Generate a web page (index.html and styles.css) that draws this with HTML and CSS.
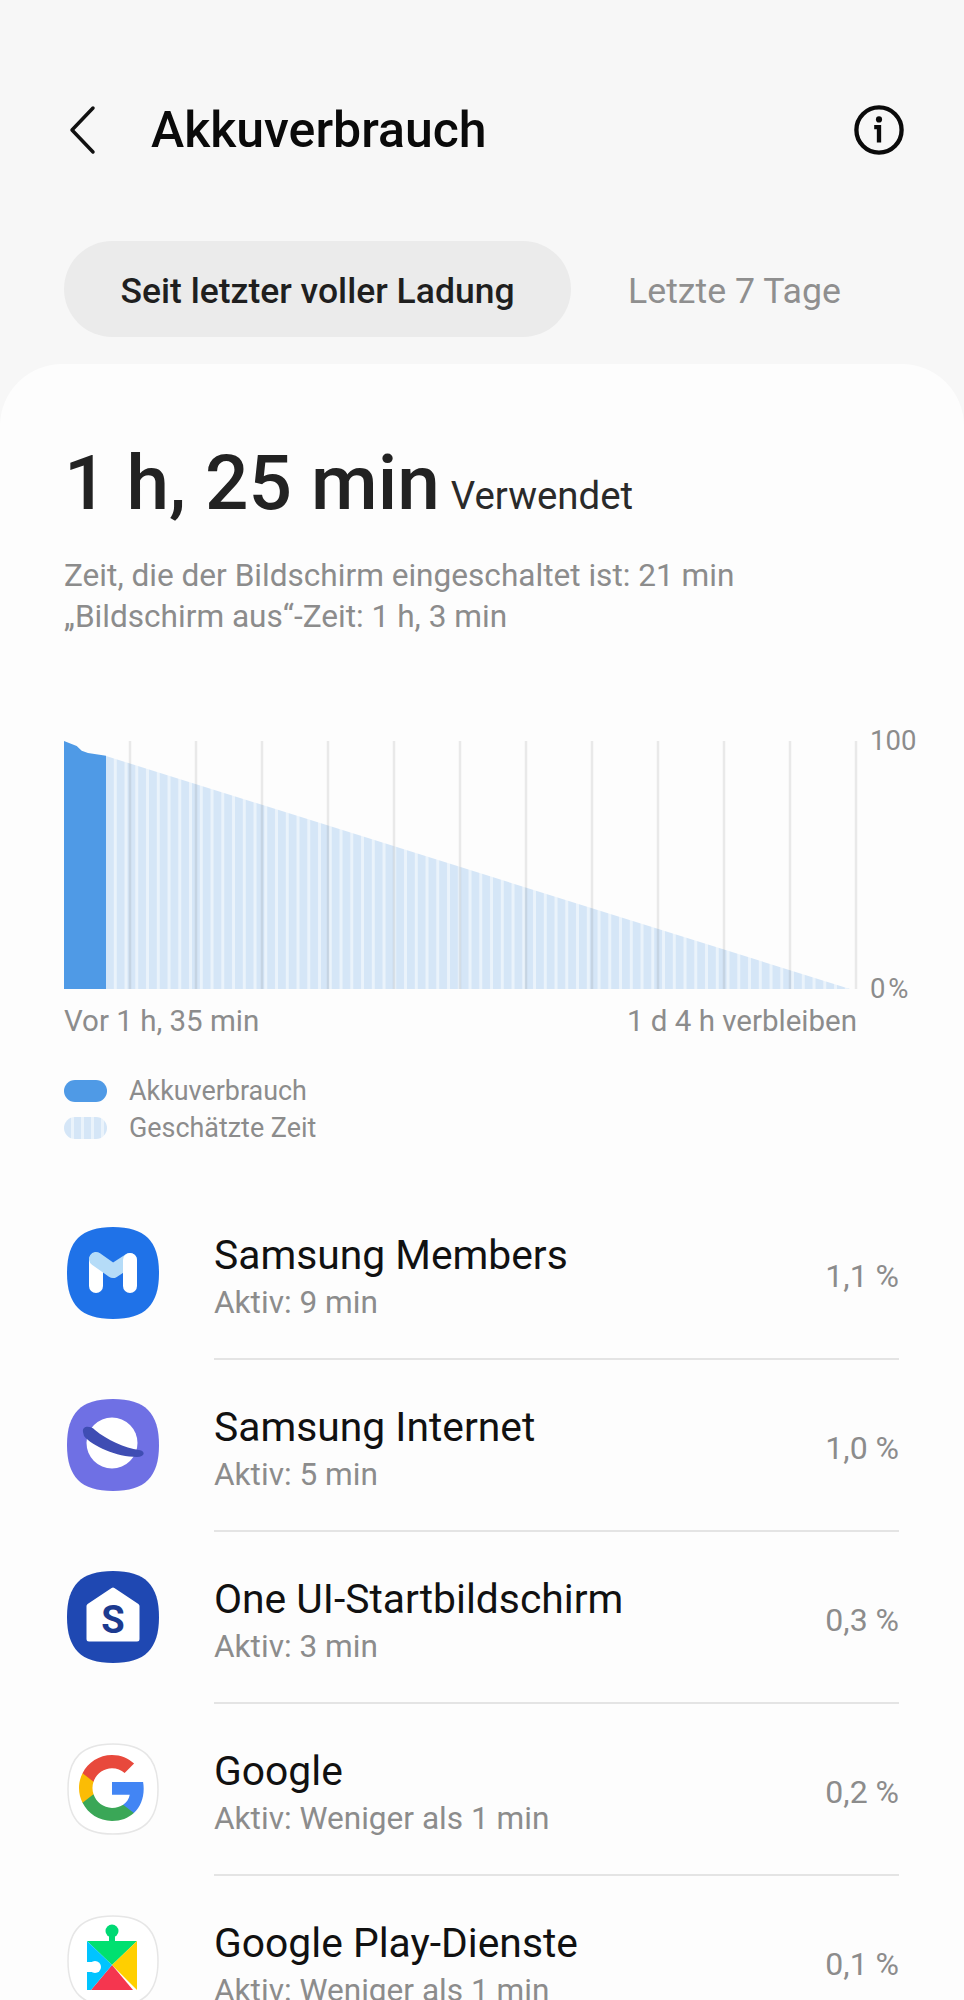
FILE: index.html
```html
<!DOCTYPE html>
<html lang="de">
<head>
<meta charset="utf-8">
<title>Akkuverbrauch</title>
<link rel="stylesheet" href="styles.css">
</head>
<body>
<div class="page">
  <header class="topbar">
    <svg class="back" viewBox="0 0 30 50"><path d="M25 3 L4 25 L25 47"/></svg>
    <h1 class="title">Akkuverbrauch</h1>
    <svg class="info" viewBox="0 0 52 52"><circle cx="26" cy="26" r="23.5"/><circle class="dot" cx="26" cy="15" r="3.2"/><path d="M21 23 H26 V39"/></svg>
  </header>
  <nav class="tabs">
    <div class="tab tab-active">Seit letzter voller Ladung</div>
    <div class="tab">Letzte 7 Tage</div>
  </nav>
  <main class="card">
    <div class="summary"><span class="big">1 h, 25 min</span><span class="used">Verwendet</span></div>
    <p class="desc">Zeit, die der Bildschirm eingeschaltet ist: 21 min<br>„Bildschirm aus“-Zeit: 1 h, 3 min</p>
    <div class="chart-row">
      <svg class="chart" viewBox="0 0 794 248">
        <defs>
          <pattern id="stripes" width="10.75" height="248" patternUnits="userSpaceOnUse" x="42">
            <rect width="10.75" height="248" fill="#eaf3fb"/>
            <rect width="7.75" height="248" fill="#d5e6f7"/>
          </pattern>
        </defs>
        <polygon points="42,15 786,248 42,248" fill="url(#stripes)"/>
        <path d="M0 0 L12.7 5 L17.7 9.7 L24 12 L42 14.7 V248 H0 Z" fill="#4f9ae6"/>
        <g class="grid">
          <line x1="66" y1="0" x2="66" y2="248"/><line x1="132" y1="0" x2="132" y2="248"/>
          <line x1="198" y1="0" x2="198" y2="248"/><line x1="264" y1="0" x2="264" y2="248"/>
          <line x1="330" y1="0" x2="330" y2="248"/><line x1="396" y1="0" x2="396" y2="248"/>
          <line x1="462" y1="0" x2="462" y2="248"/><line x1="528" y1="0" x2="528" y2="248"/>
          <line x1="594" y1="0" x2="594" y2="248"/><line x1="660" y1="0" x2="660" y2="248"/>
          <line x1="726" y1="0" x2="726" y2="248"/><line x1="792" y1="0" x2="792" y2="248"/>
        </g>
      </svg>
      <div class="axis"><span>100</span><span>0 %</span></div>
    </div>
    <div class="chart-labels"><span>Vor 1 h, 35 min</span><span>1 d 4 h verbleiben</span></div>
    <div class="legend">
      <div class="legend-item"><span class="swatch swatch-solid"></span>Akkuverbrauch</div>
      <div class="legend-item"><span class="swatch swatch-striped"></span>Geschätzte Zeit</div>
    </div>
    <ul class="apps">
      <li class="app">
        <svg class="icon" viewBox="0 0 92 92">
          <path fill="#1f72e8" d="M46 0C78 0 92 14 92 46S78 92 46 92 0 78 0 46 14 0 46 0Z"/>
          <path d="M29 59V33" stroke="#fff" stroke-width="14" stroke-linecap="round" fill="none"/>
          <path d="M29 32 L46 44 L63 33" stroke="#b5dcf8" stroke-width="14" stroke-linecap="round" stroke-linejoin="round" fill="none"/>
          <path d="M63 59V33" stroke="#fff" stroke-width="14" stroke-linecap="round" fill="none"/>
        </svg>
        <div class="app-body">
          <div class="app-text"><div class="app-name">Samsung Members</div><div class="app-sub">Aktiv: 9 min</div></div>
          <div class="app-pct">1,1 %</div>
        </div>
      </li>
      <li class="app">
        <svg class="icon" viewBox="0 0 92 92">
          <path fill="#6f70e4" d="M46 0C78 0 92 14 92 46S78 92 46 92 0 78 0 46 14 0 46 0Z"/>
          <circle cx="45" cy="44" r="25.5" fill="#fff"/>
          <path fill="#3f4db3" d="M16 33 C15 26 24 27 28 31 C40 41 58 49 72 51 C79 52 78 58 70 58 C50 58 25 47 17 37 Z"/>
        </svg>
        <div class="app-body">
          <div class="app-text"><div class="app-name">Samsung Internet</div><div class="app-sub">Aktiv: 5 min</div></div>
          <div class="app-pct">1,0 %</div>
        </div>
      </li>
      <li class="app">
        <svg class="icon" viewBox="0 0 92 92">
          <path fill="#1f48b2" d="M46 0C78 0 92 14 92 46S78 92 46 92 0 78 0 46 14 0 46 0Z"/>
          <path fill="#fff" stroke="#fff" stroke-width="5" stroke-linejoin="round" d="M46 19 L70 35 V68 H22 V35 Z"/>
          <text class="icon-s" x="46" y="62" text-anchor="middle">S</text>
        </svg>
        <div class="app-body">
          <div class="app-text"><div class="app-name">One UI-Startbildschirm</div><div class="app-sub">Aktiv: 3 min</div></div>
          <div class="app-pct">0,3 %</div>
        </div>
      </li>
      <li class="app">
        <svg class="icon" viewBox="0 0 92 92">
          <path fill="#fff" stroke="#e6e6e6" stroke-width="1.500" d="M46 1C77 1 91 15 91 46S77 91 46 91 1 77 1 46 15 1 46 1Z"/>
          <g transform="translate(9 9) scale(3)">
            <path fill="#4285f4" d="M22.560 12.250c0-.78-.07-1.530-.2-2.250H12v4.260h5.920c-.26 1.370-1.040 2.530-2.210 3.310v2.770h3.570c2.080-1.920 3.280-4.740 3.280-8.090z"/>
            <path fill="#3aa757" d="M12 23c2.970 0 5.460-.98 7.280-2.660l-3.570-2.770c-.98.66-2.230 1.060-3.710 1.060-2.860 0-5.290-1.930-6.160-4.530H2.180v2.840C3.990 20.530 7.700 23 12 23z"/>
            <path fill="#fbbc05" d="M5.840 14.090c-.22-.66-.35-1.360-.35-2.090s.13-1.430.35-2.090V7.070H2.180C1.430 8.550 1 10.220 1 12s.43 3.450 1.180 4.930l3.660-2.840z"/>
            <path fill="#e8493c" d="M12 5.380c1.620 0 3.060.56 4.210 1.640l3.150-3.150C17.450 2.090 14.970 1 12 1 7.700 1 3.990 3.470 2.180 7.070l3.660 2.840c.87-2.600 3.300-4.530 6.160-4.530z"/>
          </g>
        </svg>
        <div class="app-body">
          <div class="app-text"><div class="app-name">Google</div><div class="app-sub">Aktiv: Weniger als 1 min</div></div>
          <div class="app-pct">0,2 %</div>
        </div>
      </li>
      <li class="app">
        <svg class="icon" viewBox="0 0 92 92">
          <path fill="#fff" stroke="#e6e6e6" stroke-width="1.500" d="M46 1C77 1 91 15 91 46S77 91 46 91 1 77 1 46 15 1 46 1Z"/>
          <circle cx="45" cy="16" r="6.500" fill="#00d974"/>
          <rect x="42" y="18" width="6" height="10" fill="#00d974"/>
          <polygon points="20,26 70,26 45,50" fill="#00e070"/>
          <polygon points="70,26 70,75 45,50" fill="#ffcf00"/>
          <polygon points="24,75 66,75 45,50" fill="#f5364f"/>
          <polygon points="20,26 45,50 24,75 20,75" fill="#00c4ff"/>
          <circle cx="28" cy="52" r="6" fill="#fff"/>
          <rect x="18" y="47" width="8" height="10" fill="#fff"/>
        </svg>
        <div class="app-body">
          <div class="app-text"><div class="app-name">Google Play-Dienste</div><div class="app-sub">Aktiv: Weniger als 1 min</div></div>
          <div class="app-pct">0,1 %</div>
        </div>
      </li>
    </ul>
  </main>
</div>
</body>
</html>
```
FILE: styles.css
```css
* { box-sizing: border-box; }
html, body { margin: 0; padding: 0; }
body { background: #f7f7f7; font-family: Roboto, "Noto Sans", sans-serif; color: #1a1a1a; }
.page { height: 2000px; overflow: hidden; display: flex; flex-direction: column; padding-top: 100px; }

.topbar { display: flex; align-items: center; height: 60px; padding: 0 60px 0 68px; }
.back { width: 30px; height: 50px; fill: none; stroke: #111; stroke-width: 3.500; stroke-linecap: round; stroke-linejoin: round; margin-right: 53px; }
.title { flex: 1; margin: 0; font-size: 50px; font-weight: 500; color: #0a0a0a; line-height: 60px; }
.info { width: 50px; height: 50px; fill: none; stroke: #0a0a0a; stroke-width: 4.500; }
.info .dot { fill: #0a0a0a; stroke: none; }

.tabs { display: flex; align-items: center; margin-top: 81px; padding-left: 64px; }
.tab { height: 96px; line-height: 100px; font-size: 35.7px; color: #8f8f8f; padding-left: 57px; }
.tab-active { width: 507px; padding: 0; text-align: center; background: #ebebeb; border-radius: 48px; color: #1f1f1f; font-weight: 500; font-size: 35.5px; }

.card { flex: 1; margin-top: 27px; background: #fdfdfd; border-radius: 62px 62px 0 0; padding: 81px 0 0 64px; }
.summary { display: flex; align-items: baseline; height: 76px; }
.big { font-size: 76.5px; font-weight: 500; line-height: 76px; color: #222; }
.used { font-size: 38.4px; margin-left: 11px; color: #2a2a2a; }
.desc { margin: 34px 0 0; font-size: 31.6px; line-height: 41px; color: #8c8c8c; }

.chart-row { display: flex; margin-top: 104px; height: 248px; }
.chart { width: 794px; height: 248px; display: block; }
.grid line { stroke: rgba(60, 60, 60, 0.10); stroke-width: 2.5; }
.axis { display: flex; flex-direction: column; justify-content: space-between; margin: -18px 0 -18px 12px; font-size: 27.5px; line-height: 36px; color: #8c8c8c; word-spacing: -4px; }

.chart-labels { display: flex; justify-content: space-between; width: 793px; margin-top: 14px; font-size: 29.5px; line-height: 36px; color: #8c8c8c; }

.legend { margin-top: 33.5px; display: flex; flex-direction: column; gap: 1px; }
.legend-item { display: flex; align-items: center; height: 36px; font-size: 26.9px; color: #8c8c8c; }
.swatch { width: 43px; height: 22px; border-radius: 11px; margin-right: 22px; }
.swatch-solid { background: #4f9ae6; }
.swatch-striped { background: repeating-linear-gradient(90deg, #d5e6f7 0, #d5e6f7 7px, #eaf3fb 7px, #eaf3fb 10px); }

.apps { list-style: none; margin: 42.5px 0 0; padding: 0; }
.app { display: flex; align-items: center; height: 172px; }
.icon { width: 92px; height: 92px; flex: none; margin: 0 55px 3px 3px; }
.icon-s { font-family: Roboto, sans-serif; font-weight: 700; font-size: 38px; fill: #1c3a8f; }
.app-body { flex: 1; height: 100%; margin-right: 65px; padding-top: 6px; display: flex; align-items: center; justify-content: space-between; border-bottom: 2px solid #e4e4e4; }
.app-name { font-size: 40.8px; line-height: 48px; color: #111; }
.app-sub { font-size: 31.6px; line-height: 38px; color: #8c8c8c; margin-top: 5px; }
.app-pct { font-size: 32px; color: #8c8c8c; }
```
